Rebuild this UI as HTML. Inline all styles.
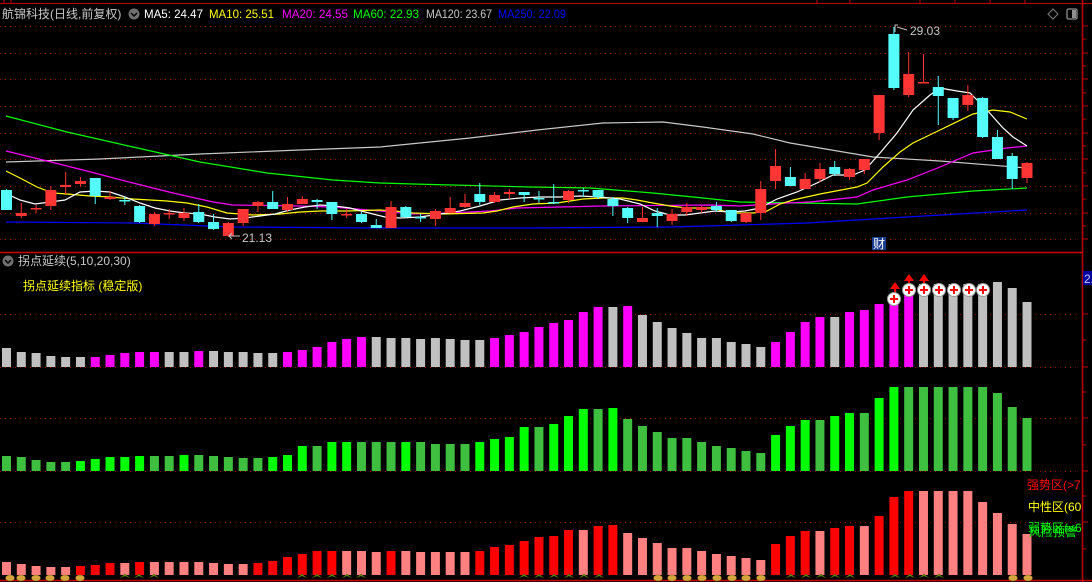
<!DOCTYPE html>
<html><head><meta charset="utf-8"><style>
html,body{margin:0;padding:0;background:#000;width:1092px;height:582px;overflow:hidden}
svg{display:block}
text{font-family:"Liberation Sans","Noto Sans CJK SC",sans-serif;font-size:12px}
.g{fill:#c0c0c0}.m{fill:#ff00ff}.G{fill:#00ff00}.d{fill:#3fbf3f}.r{fill:#ff0000}.p{fill:#ff8080}
.R{fill:#ff3434}.C{fill:#54fcfc}
.ma{fill:none;stroke-width:1.2}
.grid{stroke:#8b0000;stroke-dasharray:1 4;stroke-width:1}
</style></head><body>
<svg width="1092" height="582" viewBox="0 0 1092 582" xmlns="http://www.w3.org/2000/svg">
<rect width="1092" height="582" fill="#000"/>
<line x1="0" y1="3.5" x2="1092" y2="3.5" stroke="#c00000"/>
<line x1="4" y1="0" x2="4" y2="4" stroke="#c00000"/><line x1="11" y1="0" x2="11" y2="4" stroke="#c00000"/>
<line x1="817" y1="0" x2="817" y2="4" stroke="#c00000"/><line x1="850" y1="0" x2="850" y2="4" stroke="#c00000"/><line x1="920" y1="0" x2="920" y2="4" stroke="#c00000"/><line x1="955" y1="0" x2="955" y2="4" stroke="#c00000"/><line x1="990" y1="0" x2="990" y2="4" stroke="#c00000"/><line x1="1025" y1="0" x2="1025" y2="4" stroke="#c00000"/>
<line x1="1082.5" y1="0" x2="1082.5" y2="582" stroke="#c00000" stroke-width="1.5"/>
<line x1="0" y1="252.5" x2="1082" y2="252.5" stroke="#d00000" stroke-width="1.5"/>
<line x1="0" y1="580.5" x2="1092" y2="580.5" stroke="#d00000" stroke-width="1.5"/>
<g stroke="#c00000">
<line x1="1082" y1="26" x2="1088" y2="26"/><line x1="1082" y1="39" x2="1086" y2="39"/><line x1="1082" y1="53" x2="1088" y2="53"/><line x1="1082" y1="66" x2="1086" y2="66"/><line x1="1082" y1="79" x2="1088" y2="79"/><line x1="1082" y1="93" x2="1086" y2="93"/><line x1="1082" y1="106" x2="1088" y2="106"/><line x1="1082" y1="119" x2="1086" y2="119"/><line x1="1082" y1="133" x2="1088" y2="133"/><line x1="1082" y1="146" x2="1086" y2="146"/><line x1="1082" y1="159" x2="1088" y2="159"/><line x1="1082" y1="173" x2="1086" y2="173"/><line x1="1082" y1="186" x2="1088" y2="186"/><line x1="1082" y1="199" x2="1086" y2="199"/><line x1="1082" y1="213" x2="1088" y2="213"/><line x1="1082" y1="226" x2="1086" y2="226"/><line x1="1082" y1="239" x2="1088" y2="239"/>
<line x1="1082" y1="314" x2="1088" y2="314"/><line x1="1082" y1="340" x2="1086" y2="340"/><line x1="1082" y1="367" x2="1088" y2="367"/><line x1="1082" y1="392" x2="1086" y2="392"/><line x1="1082" y1="418" x2="1088" y2="418"/><line x1="1082" y1="445" x2="1086" y2="445"/><line x1="1082" y1="471" x2="1088" y2="471"/><line x1="1082" y1="496" x2="1086" y2="496"/><line x1="1082" y1="522" x2="1088" y2="522"/><line x1="1082" y1="549" x2="1086" y2="549"/>
</g>
<g class="grid">
<line x1="0" y1="26.5" x2="1080" y2="26.5"/><line x1="0" y1="53.5" x2="1080" y2="53.5"/><line x1="0" y1="79.5" x2="1080" y2="79.5"/><line x1="0" y1="106.5" x2="1080" y2="106.5"/><line x1="0" y1="133.5" x2="1080" y2="133.5"/><line x1="0" y1="159.5" x2="1080" y2="159.5"/><line x1="0" y1="186.5" x2="1080" y2="186.5"/><line x1="0" y1="213.5" x2="1080" y2="213.5"/><line x1="0" y1="239.5" x2="1080" y2="239.5"/>
<line x1="0" y1="314.5" x2="1080" y2="314.5"/><line x1="0" y1="367.5" x2="1080" y2="367.5"/><line x1="0" y1="418.5" x2="1080" y2="418.5"/><line x1="0" y1="471.5" x2="1080" y2="471.5"/><line x1="0" y1="522.5" x2="1080" y2="522.5"/>
</g>
<text x="2" y="18" fill="#c8c8c8">航锦科技(日线,前复权)</text>
<circle cx="134" cy="14" r="5.5" fill="#707070"/><path d="M131 13 L134 16 L137 13" stroke="#000" stroke-width="1.5" fill="none"/>
<text x="144" y="18" fill="#ffffff" textLength="59" lengthAdjust="spacingAndGlyphs">MA5: 24.47</text>
<text x="209" y="18" fill="#ffff00" textLength="65" lengthAdjust="spacingAndGlyphs">MA10: 25.51</text>
<text x="282" y="18" fill="#ff00ff" textLength="66" lengthAdjust="spacingAndGlyphs">MA20: 24.55</text>
<text x="353" y="18" fill="#00ff00" textLength="66" lengthAdjust="spacingAndGlyphs">MA60: 22.93</text>
<text x="426" y="18" fill="#c8c8c8" textLength="66" lengthAdjust="spacingAndGlyphs">MA120: 23.67</text>
<text x="498" y="18" fill="#0000ff" textLength="68" lengthAdjust="spacingAndGlyphs">MA250: 22.09</text>
<path d="M1053 9 L1058 14 L1053 19 L1048 14 Z" stroke="#808080" fill="none"/>
<rect x="1067" y="9" width="10" height="10" rx="1.5" stroke="#909090" fill="none" stroke-width="1.3"/><rect x="1072" y="10" width="4" height="8" fill="#909090"/>
<polyline class="ma" stroke="#c8c8c8" points="6,162 100,159 200,154 300,150 380,147 470,138 537,130 603,123 663,122 703,127 753,134 790,143 873,157 940,161 1027,168"/>
<polyline class="ma" stroke="#0000ff" stroke-width="1.5" points="6,222 133,223 233,227 380,228 527,228 670,227 740,225 807,223 907,217 1027,210"/>
<polyline class="ma" stroke="#00ff00" points="6,116 67,132 133,147 200,162 267,173 333,180 380,183 413,184 530,187 590,188 653,193 703,198 740,202 857,204 907,197 973,191 1027,188"/>
<polyline class="ma" stroke="#ff00ff" points="6,151 43,160 83,170 133,183 173,193 213,202 233,205 300,206 333,207 380,211 413,214 450,213 490,211 517,208 560,207 603,206 710,205 740,206 787,203 810,202 857,197 873,190 907,180 940,167 973,153 1007,148 1027,146"/>
<polyline class="ma" stroke="#ffff00" points="6,171 20,178 37,187 53,193 67,194 90,196 110,197 133,199 167,201 187,203 207,207 227,213 253,215 280,214 300,212 320,211 347,211 380,210 395,211 413,213 443,214 483,213 497,211 513,207 533,204 557,203 570,201 583,199 603,198 623,198 637,200 653,203 670,206 687,208 713,208 730,213 753,213 767,211 780,204 793,200 820,194 857,187 867,183 883,167 900,152 913,143 940,130 973,114 993,110 1010,112 1027,119"/>
<polyline class="ma" stroke="#ffffff" points="5,193 20,200 35,204 50,202 65,200 80,192 95,191 110,192 125,197 140,203 155,208 170,211 185,213 200,214 215,217 230,219 245,218 260,216 275,214 290,210 305,207 320,205 335,206 350,208 365,212 385,217 400,218 420,217 440,214 460,211 480,206 500,200 520,198 540,197 560,197 580,196 600,197 620,199 640,204 655,211 670,215 685,215 700,213 715,211 730,212 745,211 760,208 777,199 797,192 817,183 833,175 853,175 865,170 880,153 897,133 913,110 930,95 940,88 957,91 970,93 987,110 1003,128 1013,137 1027,146"/>
<g transform="translate(1,0) scale(14.79,1)">
<g class="C">
<rect x="0.338" y="189" width="0.0676" height="21"/><rect x="0" y="190" width="0.744" height="20"/>
<rect x="6.338" y="178" width="0.0676" height="26"/><rect x="6" y="178" width="0.744" height="18"/>
<rect x="8.338" y="197" width="0.0676" height="8"/><rect x="8" y="200" width="0.744" height="1.5"/>
<rect x="9.338" y="205" width="0.0676" height="18"/><rect x="9" y="206" width="0.744" height="16"/>
<rect x="13.338" y="204" width="0.0676" height="19"/><rect x="13" y="212" width="0.744" height="10"/>
<rect x="14.338" y="214" width="0.0676" height="16"/><rect x="14" y="222" width="0.744" height="7"/>
<rect x="18.338" y="191" width="0.0676" height="18"/><rect x="18" y="202" width="0.744" height="7"/>
<rect x="21.338" y="199" width="0.0676" height="10"/><rect x="21" y="200" width="0.744" height="2"/>
<rect x="22.338" y="202" width="0.0676" height="18"/><rect x="22" y="202" width="0.744" height="12"/>
<rect x="24.338" y="212" width="0.0676" height="11"/><rect x="24" y="214" width="0.744" height="8"/>
<rect x="25.338" y="219" width="0.0676" height="9"/><rect x="25" y="225" width="0.744" height="3"/>
<rect x="27.338" y="206" width="0.0676" height="12"/><rect x="27" y="207" width="0.744" height="10"/>
<rect x="28.338" y="214" width="0.0676" height="8"/><rect x="28" y="217" width="0.744" height="1.5"/>
<rect x="32.338" y="183" width="0.0676" height="22"/><rect x="32" y="194" width="0.744" height="8"/>
<rect x="35.338" y="192" width="0.0676" height="10"/><rect x="35" y="192" width="0.744" height="3"/>
<rect x="36.338" y="191" width="0.0676" height="12"/><rect x="36" y="198" width="0.744" height="1.5"/>
<rect x="37.338" y="184" width="0.0676" height="20"/><rect x="37" y="202" width="0.744" height="1.5"/>
<rect x="39.338" y="188" width="0.0676" height="9"/><rect x="39" y="190" width="0.744" height="1.5"/>
<rect x="40.338" y="190" width="0.0676" height="9"/><rect x="40" y="190" width="0.744" height="7"/>
<rect x="41.338" y="197" width="0.0676" height="19"/><rect x="41" y="199" width="0.744" height="7"/>
<rect x="42.338" y="207" width="0.0676" height="16"/><rect x="42" y="208" width="0.744" height="10"/>
<rect x="44.338" y="208" width="0.0676" height="19"/><rect x="44" y="213" width="0.744" height="3"/>
<rect x="48.338" y="202" width="0.0676" height="10"/><rect x="48" y="206" width="0.744" height="4"/>
<rect x="49.338" y="210" width="0.0676" height="12"/><rect x="49" y="210" width="0.744" height="11"/>
<rect x="53.338" y="167" width="0.0676" height="19"/><rect x="53" y="177" width="0.744" height="9"/>
<rect x="56.338" y="161" width="0.0676" height="15"/><rect x="56" y="167" width="0.744" height="7"/>
<rect x="60.338" y="27" width="0.0676" height="63"/><rect x="60" y="34" width="0.744" height="54"/>
<rect x="63.338" y="76" width="0.0676" height="49"/><rect x="63" y="87" width="0.744" height="9"/>
<rect x="64.338" y="98" width="0.0676" height="22"/><rect x="64" y="98" width="0.744" height="20"/>
<rect x="66.338" y="97" width="0.0676" height="41"/><rect x="66" y="98" width="0.744" height="39"/>
<rect x="67.338" y="130" width="0.0676" height="29"/><rect x="67" y="137" width="0.744" height="22"/>
<rect x="68.338" y="153" width="0.0676" height="36"/><rect x="68" y="156" width="0.744" height="23"/>
</g>
<g class="R">
<rect x="1.338" y="203" width="0.0676" height="15"/><rect x="1" y="213" width="0.744" height="3"/>
<rect x="2.338" y="205" width="0.0676" height="8"/><rect x="2" y="208" width="0.744" height="1.5"/>
<rect x="3.338" y="186" width="0.0676" height="24"/><rect x="3" y="190" width="0.744" height="16"/>
<rect x="4.338" y="172" width="0.0676" height="22"/><rect x="4" y="185" width="0.744" height="2"/>
<rect x="5.338" y="177" width="0.0676" height="9"/><rect x="5" y="181" width="0.744" height="3"/>
<rect x="7.338" y="191" width="0.0676" height="9"/><rect x="7" y="197" width="0.744" height="2"/>
<rect x="10.338" y="212" width="0.0676" height="14"/><rect x="10" y="214" width="0.744" height="10"/>
<rect x="11.338" y="209" width="0.0676" height="10"/><rect x="11" y="213" width="0.744" height="1.5"/>
<rect x="12.338" y="208" width="0.0676" height="13"/><rect x="12" y="213" width="0.744" height="5"/>
<rect x="15.338" y="222" width="0.0676" height="15"/><rect x="15" y="223" width="0.744" height="13"/>
<rect x="16.338" y="209" width="0.0676" height="17"/><rect x="16" y="209" width="0.744" height="14"/>
<rect x="17.338" y="201" width="0.0676" height="11"/><rect x="17" y="202" width="0.744" height="4"/>
<rect x="19.338" y="197" width="0.0676" height="15"/><rect x="19" y="204" width="0.744" height="6"/>
<rect x="20.338" y="196" width="0.0676" height="8"/><rect x="20" y="199" width="0.744" height="5"/>
<rect x="23.338" y="209" width="0.0676" height="9"/><rect x="23" y="214" width="0.744" height="1.5"/>
<rect x="26.338" y="201" width="0.0676" height="27"/><rect x="26" y="207" width="0.744" height="21"/>
<rect x="29.338" y="209" width="0.0676" height="17"/><rect x="29" y="211" width="0.744" height="8"/>
<rect x="30.338" y="197" width="0.0676" height="16"/><rect x="30" y="208" width="0.744" height="5"/>
<rect x="31.338" y="194" width="0.0676" height="14"/><rect x="31" y="203" width="0.744" height="4"/>
<rect x="33.338" y="192" width="0.0676" height="11"/><rect x="33" y="195" width="0.744" height="7"/>
<rect x="34.338" y="189" width="0.0676" height="10"/><rect x="34" y="192" width="0.744" height="2"/>
<rect x="38.338" y="190" width="0.0676" height="13"/><rect x="38" y="191" width="0.744" height="9"/>
<rect x="43.338" y="207" width="0.0676" height="15"/><rect x="43" y="218" width="0.744" height="4"/>
<rect x="45.338" y="209" width="0.0676" height="16"/><rect x="45" y="214" width="0.744" height="7"/>
<rect x="46.338" y="203" width="0.0676" height="13"/><rect x="46" y="207" width="0.744" height="5"/>
<rect x="47.338" y="206" width="0.0676" height="7"/><rect x="47" y="207" width="0.744" height="3"/>
<rect x="50.338" y="213" width="0.0676" height="10"/><rect x="50" y="213" width="0.744" height="9"/>
<rect x="51.338" y="181" width="0.0676" height="39"/><rect x="51" y="189" width="0.744" height="24"/>
<rect x="52.338" y="149" width="0.0676" height="40"/><rect x="52" y="166" width="0.744" height="15"/>
<rect x="54.338" y="173" width="0.0676" height="16"/><rect x="54" y="179" width="0.744" height="10"/>
<rect x="55.338" y="163" width="0.0676" height="19"/><rect x="55" y="169" width="0.744" height="10"/>
<rect x="57.338" y="168" width="0.0676" height="12"/><rect x="57" y="169" width="0.744" height="8"/>
<rect x="58.338" y="159" width="0.0676" height="15"/><rect x="58" y="159" width="0.744" height="11"/>
<rect x="59.338" y="95" width="0.0676" height="45"/><rect x="59" y="95" width="0.744" height="38"/>
<rect x="61.338" y="52" width="0.0676" height="45"/><rect x="61" y="74" width="0.744" height="21"/>
<rect x="62.338" y="54" width="0.0676" height="29"/><rect x="62" y="82" width="0.744" height="1.5"/>
<rect x="65.338" y="85" width="0.0676" height="26"/><rect x="65" y="95" width="0.744" height="10"/>
<rect x="69.338" y="162" width="0.0676" height="21"/><rect x="69" y="163" width="0.744" height="15"/>
</g>
</g>
<path d="M240 236 L229 236 M232 233 L229 236 L232 239" stroke="#c0c0c0" fill="none"/>
<text x="242" y="242" fill="#c8c8c8" font-size="12.5">21.13</text>
<path d="M895 32 L895 25 L898 25 M897 27 L907 30" stroke="#c0c0c0" fill="none"/>
<text x="910" y="35" fill="#c8c8c8" font-size="12.5">29.03</text>
<rect x="872" y="237" width="14" height="13" fill="#1c3c90"/>
<text x="873" y="248" fill="#ffffff" font-size="12">财</text>
<circle cx="8" cy="261" r="5.5" fill="#707070"/><path d="M5 260 L8 263 L11 260" stroke="#000" stroke-width="1.5" fill="none"/>
<text x="18" y="265" fill="#c8c8c8">拐点延续(5,10,20,30)</text>
<text x="23" y="290" fill="#ffff00">拐点延续指标 (稳定版)</text>
<rect x="1083" y="271" width="9" height="14" fill="#0000a0"/><text x="1084" y="283" fill="#c8c8ff" font-size="11">2.</text>
<g transform="translate(2,0) scale(14.79,1)">
<rect class="g" x="0" y="348" width=".6085" height="19"/><rect class="g" x="1" y="352" width=".6085" height="15"/><rect class="g" x="2" y="353" width=".6085" height="14"/><rect class="g" x="3" y="356" width=".6085" height="11"/><rect class="g" x="4" y="357" width=".6085" height="10"/><rect class="g" x="5" y="357" width=".6085" height="10"/><rect class="m" x="6" y="357" width=".6085" height="10"/><rect class="m" x="7" y="355" width=".6085" height="12"/><rect class="m" x="8" y="353" width=".6085" height="14"/><rect class="m" x="9" y="352" width=".6085" height="15"/><rect class="m" x="10" y="352" width=".6085" height="15"/><rect class="g" x="11" y="352" width=".6085" height="15"/><rect class="g" x="12" y="352" width=".6085" height="15"/><rect class="m" x="13" y="351" width=".6085" height="16"/><rect class="g" x="14" y="351" width=".6085" height="16"/><rect class="g" x="15" y="352" width=".6085" height="15"/><rect class="g" x="16" y="352" width=".6085" height="15"/><rect class="g" x="17" y="353" width=".6085" height="14"/><rect class="g" x="18" y="353" width=".6085" height="14"/><rect class="m" x="19" y="352" width=".6085" height="15"/><rect class="m" x="20" y="350" width=".6085" height="17"/><rect class="m" x="21" y="347" width=".6085" height="20"/><rect class="m" x="22" y="342" width=".6085" height="25"/><rect class="m" x="23" y="339" width=".6085" height="28"/><rect class="m" x="24" y="337" width=".6085" height="30"/><rect class="g" x="25" y="337" width=".6085" height="30"/><rect class="g" x="26" y="338" width=".6085" height="29"/><rect class="g" x="27" y="338" width=".6085" height="29"/><rect class="g" x="28" y="339" width=".6085" height="28"/><rect class="g" x="29" y="338" width=".6085" height="29"/><rect class="g" x="30" y="339" width=".6085" height="28"/><rect class="g" x="31" y="340" width=".6085" height="27"/><rect class="g" x="32" y="340" width=".6085" height="27"/><rect class="m" x="33" y="338" width=".6085" height="29"/><rect class="m" x="34" y="335" width=".6085" height="32"/><rect class="m" x="35" y="332" width=".6085" height="35"/><rect class="m" x="36" y="327" width=".6085" height="40"/><rect class="m" x="37" y="323" width=".6085" height="44"/><rect class="m" x="38" y="320" width=".6085" height="47"/><rect class="m" x="39" y="312" width=".6085" height="55"/><rect class="m" x="40" y="307" width=".6085" height="60"/><rect class="g" x="41" y="307" width=".6085" height="60"/><rect class="m" x="42" y="306" width=".6085" height="61"/><rect class="g" x="43" y="315" width=".6085" height="52"/><rect class="g" x="44" y="322" width=".6085" height="45"/><rect class="g" x="45" y="328" width=".6085" height="39"/><rect class="g" x="46" y="333" width=".6085" height="34"/><rect class="g" x="47" y="338" width=".6085" height="29"/><rect class="g" x="48" y="338" width=".6085" height="29"/><rect class="g" x="49" y="342" width=".6085" height="25"/><rect class="g" x="50" y="344" width=".6085" height="23"/><rect class="g" x="51" y="347" width=".6085" height="20"/><rect class="m" x="52" y="342" width=".6085" height="25"/><rect class="m" x="53" y="332" width=".6085" height="35"/><rect class="m" x="54" y="322" width=".6085" height="45"/><rect class="m" x="55" y="317" width=".6085" height="50"/><rect class="g" x="56" y="317" width=".6085" height="50"/><rect class="m" x="57" y="312" width=".6085" height="55"/><rect class="m" x="58" y="310" width=".6085" height="57"/><rect class="m" x="59" y="304" width=".6085" height="63"/><rect class="m" x="60" y="297" width=".6085" height="70"/><rect class="m" x="61" y="288" width=".6085" height="79"/><rect class="g" x="62" y="284" width=".6085" height="83"/><rect class="g" x="63" y="284" width=".6085" height="83"/><rect class="g" x="64" y="284" width=".6085" height="83"/><rect class="g" x="65" y="284" width=".6085" height="83"/><rect class="g" x="66" y="284" width=".6085" height="83"/><rect class="g" x="67" y="282" width=".6085" height="85"/><rect class="g" x="68" y="288" width=".6085" height="79"/><rect class="g" x="69" y="302" width=".6085" height="65"/>

<rect class="d" x="0" y="456" width=".6085" height="15"/><rect class="d" x="1" y="457" width=".6085" height="14"/><rect class="d" x="2" y="460" width=".6085" height="11"/><rect class="d" x="3" y="462" width=".6085" height="9"/><rect class="d" x="4" y="462" width=".6085" height="9"/><rect class="G" x="5" y="461" width=".6085" height="10"/><rect class="G" x="6" y="459" width=".6085" height="12"/><rect class="G" x="7" y="457" width=".6085" height="14"/><rect class="G" x="8" y="457" width=".6085" height="14"/><rect class="G" x="9" y="456" width=".6085" height="15"/><rect class="d" x="10" y="456" width=".6085" height="15"/><rect class="d" x="11" y="456" width=".6085" height="15"/><rect class="G" x="12" y="455" width=".6085" height="16"/><rect class="d" x="13" y="455" width=".6085" height="16"/><rect class="d" x="14" y="456" width=".6085" height="15"/><rect class="d" x="15" y="457" width=".6085" height="14"/><rect class="d" x="16" y="458" width=".6085" height="13"/><rect class="d" x="17" y="458" width=".6085" height="13"/><rect class="G" x="18" y="457" width=".6085" height="14"/><rect class="G" x="19" y="455" width=".6085" height="16"/><rect class="G" x="20" y="446" width=".6085" height="25"/><rect class="d" x="21" y="446" width=".6085" height="25"/><rect class="G" x="22" y="442" width=".6085" height="29"/><rect class="G" x="23" y="442" width=".6085" height="29"/><rect class="d" x="24" y="442" width=".6085" height="29"/><rect class="d" x="25" y="442" width=".6085" height="29"/><rect class="d" x="26" y="442" width=".6085" height="29"/><rect class="G" x="27" y="442" width=".6085" height="29"/><rect class="d" x="28" y="442" width=".6085" height="29"/><rect class="d" x="29" y="444" width=".6085" height="27"/><rect class="d" x="30" y="444" width=".6085" height="27"/><rect class="d" x="31" y="444" width=".6085" height="27"/><rect class="G" x="32" y="442" width=".6085" height="29"/><rect class="G" x="33" y="439" width=".6085" height="32"/><rect class="G" x="34" y="437" width=".6085" height="34"/><rect class="G" x="35" y="427" width=".6085" height="44"/><rect class="d" x="36" y="427" width=".6085" height="44"/><rect class="G" x="37" y="424" width=".6085" height="47"/><rect class="G" x="38" y="416" width=".6085" height="55"/><rect class="G" x="39" y="409" width=".6085" height="62"/><rect class="d" x="40" y="409" width=".6085" height="62"/><rect class="G" x="41" y="408" width=".6085" height="63"/><rect class="d" x="42" y="419" width=".6085" height="52"/><rect class="d" x="43" y="426" width=".6085" height="45"/><rect class="d" x="44" y="432" width=".6085" height="39"/><rect class="d" x="45" y="438" width=".6085" height="33"/><rect class="d" x="46" y="438" width=".6085" height="33"/><rect class="d" x="47" y="442" width=".6085" height="29"/><rect class="d" x="48" y="446" width=".6085" height="25"/><rect class="d" x="49" y="448" width=".6085" height="23"/><rect class="d" x="50" y="451" width=".6085" height="20"/><rect class="d" x="51" y="453" width=".6085" height="18"/><rect class="G" x="52" y="435" width=".6085" height="36"/><rect class="G" x="53" y="426" width=".6085" height="45"/><rect class="G" x="54" y="420" width=".6085" height="51"/><rect class="d" x="55" y="420" width=".6085" height="51"/><rect class="G" x="56" y="416" width=".6085" height="55"/><rect class="G" x="57" y="413" width=".6085" height="58"/><rect class="d" x="58" y="413" width=".6085" height="58"/><rect class="G" x="59" y="398" width=".6085" height="73"/><rect class="G" x="60" y="387" width=".6085" height="84"/><rect class="d" x="61" y="387" width=".6085" height="84"/><rect class="d" x="62" y="387" width=".6085" height="84"/><rect class="d" x="63" y="387" width=".6085" height="84"/><rect class="d" x="64" y="387" width=".6085" height="84"/><rect class="d" x="65" y="387" width=".6085" height="84"/><rect class="d" x="66" y="387" width=".6085" height="84"/><rect class="d" x="67" y="393" width=".6085" height="78"/><rect class="d" x="68" y="407" width=".6085" height="64"/><rect class="d" x="69" y="418" width=".6085" height="53"/>

<rect class="p" x="0" y="562" width=".6085" height="13"/><rect class="p" x="1" y="564" width=".6085" height="11"/><rect class="p" x="2" y="566" width=".6085" height="9"/><rect class="p" x="3" y="567" width=".6085" height="8"/><rect class="p" x="4" y="567" width=".6085" height="8"/><rect class="r" x="5" y="566" width=".6085" height="9"/><rect class="r" x="6" y="565" width=".6085" height="10"/><rect class="r" x="7" y="563" width=".6085" height="12"/><rect class="p" x="8" y="563" width=".6085" height="12"/><rect class="r" x="9" y="562" width=".6085" height="13"/><rect class="p" x="10" y="562" width=".6085" height="13"/><rect class="p" x="11" y="562" width=".6085" height="13"/><rect class="p" x="12" y="562" width=".6085" height="13"/><rect class="p" x="13" y="562" width=".6085" height="13"/><rect class="p" x="14" y="563" width=".6085" height="12"/><rect class="p" x="15" y="564" width=".6085" height="11"/><rect class="p" x="16" y="564" width=".6085" height="11"/><rect class="r" x="17" y="563" width=".6085" height="12"/><rect class="r" x="18" y="561" width=".6085" height="14"/><rect class="r" x="19" y="557" width=".6085" height="18"/><rect class="r" x="20" y="554" width=".6085" height="21"/><rect class="r" x="21" y="551" width=".6085" height="24"/><rect class="r" x="22" y="551" width=".6085" height="24"/><rect class="p" x="23" y="551" width=".6085" height="24"/><rect class="p" x="24" y="551" width=".6085" height="24"/><rect class="p" x="25" y="552" width=".6085" height="23"/><rect class="r" x="26" y="551" width=".6085" height="24"/><rect class="p" x="27" y="551" width=".6085" height="24"/><rect class="p" x="28" y="552" width=".6085" height="23"/><rect class="p" x="29" y="552" width=".6085" height="23"/><rect class="p" x="30" y="552" width=".6085" height="23"/><rect class="p" x="31" y="552" width=".6085" height="23"/><rect class="r" x="32" y="551" width=".6085" height="24"/><rect class="r" x="33" y="547" width=".6085" height="28"/><rect class="r" x="34" y="545" width=".6085" height="30"/><rect class="r" x="35" y="541" width=".6085" height="34"/><rect class="r" x="36" y="537" width=".6085" height="38"/><rect class="r" x="37" y="536" width=".6085" height="39"/><rect class="r" x="38" y="530" width=".6085" height="45"/><rect class="p" x="39" y="530" width=".6085" height="45"/><rect class="r" x="40" y="526" width=".6085" height="49"/><rect class="r" x="41" y="525" width=".6085" height="50"/><rect class="p" x="42" y="533" width=".6085" height="42"/><rect class="p" x="43" y="538" width=".6085" height="37"/><rect class="p" x="44" y="543" width=".6085" height="32"/><rect class="p" x="45" y="548" width=".6085" height="27"/><rect class="p" x="46" y="548" width=".6085" height="27"/><rect class="p" x="47" y="551" width=".6085" height="24"/><rect class="p" x="48" y="554" width=".6085" height="21"/><rect class="p" x="49" y="556" width=".6085" height="19"/><rect class="p" x="50" y="558" width=".6085" height="17"/><rect class="p" x="51" y="560" width=".6085" height="15"/><rect class="r" x="52" y="544" width=".6085" height="31"/><rect class="r" x="53" y="536" width=".6085" height="39"/><rect class="r" x="54" y="531" width=".6085" height="44"/><rect class="p" x="55" y="531" width=".6085" height="44"/><rect class="r" x="56" y="528" width=".6085" height="47"/><rect class="r" x="57" y="526" width=".6085" height="49"/><rect class="p" x="58" y="526" width=".6085" height="49"/><rect class="r" x="59" y="516" width=".6085" height="59"/><rect class="r" x="60" y="497" width=".6085" height="78"/><rect class="r" x="61" y="491" width=".6085" height="84"/><rect class="p" x="62" y="491" width=".6085" height="84"/><rect class="p" x="63" y="491" width=".6085" height="84"/><rect class="p" x="64" y="491" width=".6085" height="84"/><rect class="p" x="65" y="491" width=".6085" height="84"/><rect class="p" x="66" y="502" width=".6085" height="73"/><rect class="p" x="67" y="513" width=".6085" height="62"/><rect class="p" x="68" y="524" width=".6085" height="51"/><rect class="p" x="69" y="534" width=".6085" height="41"/>
</g>
<g stroke="#ff0000" stroke-width="2">
<line x1="895" y1="287" x2="895" y2="300"/><line x1="909" y1="279" x2="909" y2="291"/><line x1="924" y1="279" x2="924" y2="291"/>
</g>
<g fill="#ff0000"><path d="M890 289 L895 282 L900 289 Z"/><path d="M904 281 L909 274 L914 281 Z"/><path d="M919 281 L924 274 L929 281 Z"/></g>
<g>
<circle cx="894" cy="299" r="6.5" fill="#fff" stroke="#999"/><circle cx="909" cy="290" r="6.5" fill="#fff" stroke="#999"/><circle cx="924" cy="290" r="6.5" fill="#fff" stroke="#999"/><circle cx="939" cy="290" r="6.5" fill="#fff" stroke="#999"/><circle cx="954" cy="290" r="6.5" fill="#fff" stroke="#999"/><circle cx="969" cy="290" r="6.5" fill="#fff" stroke="#999"/><circle cx="983" cy="290" r="6.5" fill="#fff" stroke="#999"/>
</g>
<g stroke="#ff0000" stroke-width="2">
<path d="M890 299h8M894 295v8"/><path d="M905 290h8M909 286v8"/><path d="M920 290h8M924 286v8"/><path d="M935 290h8M939 286v8"/><path d="M950 290h8M954 286v8"/><path d="M965 290h8M969 286v8"/><path d="M979 290h8M983 286v8"/>
</g>
<text x="1027" y="489" fill="#ff0000">强势区(&gt;7</text>
<text x="1028" y="511" fill="#ffff00">中性区(60</text>
<text x="1028" y="532" fill="#00ff00">弱势区(&lt;6</text>
<text x="1029" y="536" fill="#00ff00">风险预警</text>
<g fill="#d4a53a" stroke="#8a6a20" stroke-width=".5">
<ellipse cx="10" cy="578" rx="4.5" ry="3"/><ellipse cx="21" cy="578" rx="4.5" ry="3"/><ellipse cx="36" cy="578" rx="4.5" ry="3"/><ellipse cx="50" cy="578" rx="4.5" ry="3"/><ellipse cx="65" cy="578" rx="4.5" ry="3"/><ellipse cx="80" cy="578" rx="4.5" ry="3"/>
<ellipse cx="658" cy="578" rx="4.5" ry="3"/><ellipse cx="672" cy="578" rx="4.5" ry="3"/><ellipse cx="687" cy="578" rx="4.5" ry="3"/><ellipse cx="702" cy="578" rx="4.5" ry="3"/><ellipse cx="717" cy="578" rx="4.5" ry="3"/><ellipse cx="732" cy="578" rx="4.5" ry="3"/><ellipse cx="746" cy="578" rx="4.5" ry="3"/><ellipse cx="761" cy="578" rx="4.5" ry="3"/>
<ellipse cx="1013" cy="578" rx="4.5" ry="3"/><ellipse cx="1028" cy="578" rx="4.5" ry="3"/>
</g>
<g fill="#6a8a10" stroke="#3a4a00" stroke-width=".5">
<path d="M120 578 L125 574 L130 578 L125 576 Z"/><path d="M134 578 L139 574 L144 578 L139 576 Z"/><path d="M149 578 L154 574 L159 578 L154 576 Z"/>
<path d="M297 578 L302 574 L307 578 L302 576 Z"/><path d="M312 578 L317 574 L322 578 L317 576 Z"/><path d="M327 578 L332 574 L337 578 L332 576 Z"/><path d="M342 578 L347 574 L352 578 L347 576 Z"/><path d="M356 578 L361 574 L366 578 L361 576 Z"/>
<path d="M519 578 L524 574 L529 578 L524 576 Z"/><path d="M534 578 L539 574 L544 578 L539 576 Z"/><path d="M549 578 L554 574 L559 578 L554 576 Z"/><path d="M564 578 L569 574 L574 578 L569 576 Z"/><path d="M579 578 L584 574 L589 578 L584 576 Z"/><path d="M594 578 L599 574 L604 578 L599 576 Z"/>
<path d="M786 578 L791 574 L796 578 L791 576 Z"/><path d="M801 578 L806 574 L811 578 L806 576 Z"/><path d="M816 578 L821 574 L826 578 L821 576 Z"/><path d="M830 578 L835 574 L840 578 L835 576 Z"/><path d="M845 578 L850 574 L855 578 L850 576 Z"/>
<path d="M890 578 L895 574 L900 578 L895 576 Z"/><path d="M905 578 L910 574 L915 578 L910 576 Z"/><path d="M919 578 L924 574 L929 578 L924 576 Z"/><path d="M934 578 L939 574 L944 578 L939 576 Z"/>
</g>
</svg>
</body></html>
